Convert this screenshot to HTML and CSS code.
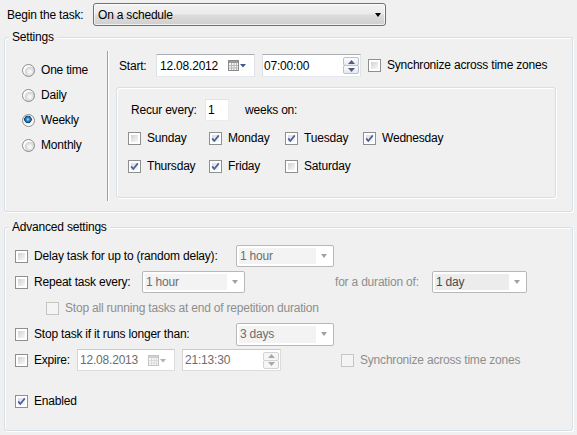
FILE: index.html
```html
<!DOCTYPE html>
<html>
<head>
<meta charset="utf-8">
<link rel="stylesheet" href="styles.css">
</head>
<body>
<div class="dlg">
  <div class="top-row">
    <span class="top-label">Begin the task:</span>
    <div class="btn-combo"><span class="combo-text">On a schedule</span><span class="arrow arrow-black"></span></div>
  </div>

  <div class="group settings">
    <div class="group-title">Settings</div>
    <div class="settings-body">
      <div class="radios">
        <div class="radio-row"><span class="radio"></span><span class="lbl">One time</span></div>
        <div class="radio-row"><span class="radio"></span><span class="lbl">Daily</span></div>
        <div class="radio-row"><span class="radio on"></span><span class="lbl">Weekly</span></div>
        <div class="radio-row"><span class="radio"></span><span class="lbl">Monthly</span></div>
      </div>
      <div class="sep"></div>
      <div class="right-col">
        <div class="start-row">
          <span class="start-label">Start:</span>
          <div class="field date-field">
            <span class="field-text">12.08.2012</span>
            <svg class="cal" width="19" height="11" viewBox="0 0 19 11">
              <rect x="0.5" y="0.5" width="10" height="10" fill="#f4f4f4" stroke="#8a8a8a"/>
              <rect x="1" y="1" width="9" height="2" fill="#9a9a9a"/>
              <path d="M3.5 3v7M6 3v7M8.5 3v7M1 5.5h9M1 8h9" stroke="#b8b8b8" stroke-width="1"/>
              <path d="M12 4h6l-3 3.5z" fill="#3f5a8c"/>
            </svg>
          </div>
          <div class="field time-field">
            <span class="field-text">07:00:00</span>
            <div class="spin">
              <span class="spin-btn"><svg width="7" height="4" viewBox="0 0 7 4"><path d="M0 4h7L3.5 0z" fill="#4b6088"/></svg></span>
              <span class="spin-btn"><svg width="7" height="4" viewBox="0 0 7 4"><path d="M0 0h7L3.5 4z" fill="#4b6088"/></svg></span>
            </div>
          </div>
          <span class="cb"></span>
          <span class="lbl cb-lbl">Synchronize across time zones</span>
        </div>

        <div class="recur-panel">
          <div class="recur-row">
            <span class="recur-label">Recur every:</span>
            <div class="field num-field"><span class="field-text">1</span></div>
            <span class="lbl weeks-lbl">weeks on:</span>
          </div>
          <div class="days">
            <div class="day"><span class="cb"></span><span class="lbl">Sunday</span></div>
            <div class="day"><span class="cb checked"><svg width="11" height="11" viewBox="0 0 11 11"><path d="M2.2 5.4l2.1 2.6 4.5-5.6" fill="none" stroke="#4a5e96" stroke-width="1.7"/></svg></span><span class="lbl">Monday</span></div>
            <div class="day"><span class="cb checked"><svg width="11" height="11" viewBox="0 0 11 11"><path d="M2.2 5.4l2.1 2.6 4.5-5.6" fill="none" stroke="#4a5e96" stroke-width="1.7"/></svg></span><span class="lbl">Tuesday</span></div>
            <div class="day"><span class="cb checked"><svg width="11" height="11" viewBox="0 0 11 11"><path d="M2.2 5.4l2.1 2.6 4.5-5.6" fill="none" stroke="#4a5e96" stroke-width="1.7"/></svg></span><span class="lbl">Wednesday</span></div>
            <div class="day"><span class="cb checked"><svg width="11" height="11" viewBox="0 0 11 11"><path d="M2.2 5.4l2.1 2.6 4.5-5.6" fill="none" stroke="#4a5e96" stroke-width="1.7"/></svg></span><span class="lbl">Thursday</span></div>
            <div class="day"><span class="cb checked"><svg width="11" height="11" viewBox="0 0 11 11"><path d="M2.2 5.4l2.1 2.6 4.5-5.6" fill="none" stroke="#4a5e96" stroke-width="1.7"/></svg></span><span class="lbl">Friday</span></div>
            <div class="day"><span class="cb"></span><span class="lbl">Saturday</span></div>
          </div>
        </div>
      </div>
    </div>
  </div>

  <div class="group advanced">
    <div class="group-title">Advanced settings</div>
    <div class="adv-rows">
      <div class="adv-row">
        <span class="cb"></span>
        <span class="lbl adv-lbl w-long">Delay task for up to (random delay):</span>
        <div class="dis-combo w98"><span class="dis-text">1 hour</span><span class="arrow arrow-gray"></span></div>
      </div>
      <div class="adv-row">
        <span class="cb"></span>
        <span class="lbl adv-lbl w-repeat">Repeat task every:</span>
        <div class="dis-combo w103"><span class="dis-text">1 hour</span><span class="arrow arrow-gray"></span></div>
        <span class="lbl gray dur-lbl">for a duration of:</span>
        <div class="dis-combo w95"><span class="dis-text dark">1 day</span><span class="arrow arrow-gray"></span></div>
      </div>
      <div class="adv-row indent">
        <span class="cb disabled"></span>
        <span class="lbl adv-lbl gray">Stop all running tasks at end of repetition duration</span>
      </div>
      <div class="adv-row">
        <span class="cb"></span>
        <span class="lbl adv-lbl w-long">Stop task if it runs longer than:</span>
        <div class="dis-combo w98 h23"><span class="dis-text">3 days</span><span class="arrow arrow-gray"></span></div>
      </div>
      <div class="adv-row">
        <span class="cb"></span>
        <span class="lbl adv-lbl w-expire">Expire:</span>
        <div class="field date-field dis-field w98">
          <span class="field-text">12.08.2013</span>
          <svg class="cal" width="19" height="11" viewBox="0 0 19 11">
            <rect x="0.5" y="0.5" width="10" height="10" fill="#f8f8f8" stroke="#c4c4c4"/>
            <rect x="1" y="1" width="9" height="2" fill="#cfcfcf"/>
            <path d="M3.5 3v7M6 3v7M8.5 3v7M1 5.5h9M1 8h9" stroke="#dadada" stroke-width="1"/>
            <path d="M12 4h6l-3 3.5z" fill="#b0b0b0"/>
          </svg>
        </div>
        <div class="field time-field dis-field">
          <span class="field-text">21:13:30</span>
          <div class="spin dis-spin">
            <span class="spin-btn"><svg width="7" height="4" viewBox="0 0 7 4"><path d="M0 4h7L3.5 0z" fill="#a8a8a8"/></svg></span>
            <span class="spin-btn"><svg width="7" height="4" viewBox="0 0 7 4"><path d="M0 0h7L3.5 4z" fill="#a8a8a8"/></svg></span>
          </div>
        </div>
        <span class="cb disabled sync2"></span>
        <span class="lbl gray cb-lbl">Synchronize across time zones</span>
      </div>
      <div class="adv-row enabled-row">
        <span class="cb checked"><svg width="11" height="11" viewBox="0 0 11 11"><path d="M2.2 5.4l2.1 2.6 4.5-5.6" fill="none" stroke="#4a5e96" stroke-width="1.7"/></svg></span>
        <span class="lbl adv-lbl">Enabled</span>
      </div>
    </div>
  </div>
</div>
</body>
</html>
```

FILE: styles.css
```css
html, body {
  margin: 0;
  padding: 0;
}
body {
  background: #f0f0f0;
  font-family: "Liberation Sans", Arial, sans-serif;
  font-size: 12px;
  letter-spacing: -0.2px;
  color: #000;
  width: 577px;
  height: 435px;
  overflow: hidden;
}
.dlg {
  padding-top: 3px;
}
.lbl {
  white-space: nowrap;
  line-height: 15px;
}
.gray {
  color: #8e8e8e;
}

/* top row */
.top-row {
  display: flex;
  align-items: center;
  padding-left: 7px;
  height: 23px;
}
.top-label {
  width: 86px;
  white-space: nowrap;
}
.btn-combo {
  box-sizing: border-box;
  width: 293px;
  height: 23px;
  border: 1px solid #707070;
  border-radius: 3px;
  background: linear-gradient(#f3f3f3 0%, #ebebeb 48%, #dddddd 52%, #cfcfcf 100%);
  box-shadow: inset 0 0 0 1px rgba(255,255,255,0.7);
  display: flex;
  align-items: center;
  justify-content: space-between;
  padding: 0 4px 0 4px;
}
.arrow {
  width: 0;
  height: 0;
  border-left: 3.5px solid transparent;
  border-right: 3.5px solid transparent;
  border-top: 4px solid #000;
}
.arrow-gray {
  border-top-color: #a2a2a2;
  margin-right: 4px;
}

/* group boxes */
.group {
  box-sizing: border-box;
  width: 569px;
  margin-left: 4px;
  border: 1px solid #d5dfe5;
  border-radius: 3px;
  box-shadow: inset 1px 1px 0 #fff, 1px 1px 0 #fff;
}
.settings {
  margin-top: 11px;
  height: 175px;
}
.advanced {
  margin-top: 15px;
  height: 204px;
}
.group-title {
  display: block;
  width: max-content;
  margin-top: -8px;
  margin-left: 4px;
  padding: 0 3px;
  height: 15px;
  line-height: 15px;
  background: #f0f0f0;
}

/* settings body */
.settings-body {
  display: flex;
  margin-top: 6px;
}
.radios {
  width: 102px;
  box-sizing: border-box;
  padding-left: 17px;
  padding-top: 7px;
}
.radio-row {
  display: flex;
  align-items: center;
  height: 25px;
}
.radio-row .lbl {
  margin-left: 6px;
}
.radio {
  box-sizing: border-box;
  width: 13px;
  height: 13px;
  flex: none;
  border-radius: 50%;
  border: 1px solid #8a8d90;
  background: radial-gradient(circle at 62% 62%, #fbfbfb 0, #eeeeee 2px, #d2d2d2 4.5px, #fdfdfd 5.5px);
}
.radio.on {
  background: radial-gradient(circle at 45% 40%, #b7e4fb 0, #3c95d4 1.5px, #16578f 3px, #0b3d6c 3.5px, #e6e6e6 4px, #fdfdfd 5.5px);
}
.sep {
  width: 1px;
  height: 150px;
  background: #a0a0a0;
  border-right: 1px solid #fff;
}
.right-col {
  padding-left: 7px;
}
.start-row {
  display: flex;
  align-items: center;
  margin-top: 3px;
  padding-left: 3px;
  height: 23px;
}
.start-label {
  width: 37px;
}
.field {
  box-sizing: border-box;
  background: #fff;
  border: 1px solid;
  border-color: #abadb3 #e2e3ea #e3e9ef #dbdfe6;
  display: flex;
  align-items: center;
  white-space: nowrap;
}
.field-text {
  padding-left: 3px;
  flex: 1;
}
.date-field {
  width: 99px;
  height: 23px;
}
.date-field .cal {
  margin-right: 7px;
}
.time-field {
  width: 99px;
  height: 23px;
  margin-left: 7px;
}
.time-field .field-text {
  padding-left: 1px;
}
.spin {
  display: flex;
  flex-direction: column;
  margin-right: 1px;
}
.spin-btn {
  box-sizing: border-box;
  width: 16px;
  height: 9px;
  border: 1px solid #b9c2cb;
  border-radius: 2px;
  background: linear-gradient(#fdfdfd, #e8e9eb);
  display: flex;
  align-items: center;
  justify-content: center;
}
.spin-btn + .spin-btn {
  margin-top: -1px;
  height: 9px;
}
.dis-spin .spin-btn {
  border-color: #d3d3d3;
  background: #f6f6f6;
}

/* checkbox */
.cb {
  box-sizing: border-box;
  flex: none;
  width: 13px;
  height: 13px;
  border: 1px solid #8e8f8f;
  padding: 2px;
  background: linear-gradient(135deg, #d2d2d2, #f8f8f8) content-box, #fff;
  display: block;
}
.cb svg {
  display: block;
  margin: -2px;
}
.cb.checked {
  background: linear-gradient(135deg, #d9dde4, #f7f8fa) content-box, #fff;
}
.cb.disabled {
  border-color: #c5c5c5;
  background: #f4f4f4;
}
.cb-lbl {
  margin-left: 6px;
}
.start-row .cb {
  margin-left: 7px;
}

/* recur panel */
.recur-panel {
  box-sizing: border-box;
  width: 440px;
  height: 111px;
  margin-top: 10px;
  border: 1px solid #d5dfe5;
  border-radius: 3px;
  box-shadow: inset 1px 1px 0 #fff, 1px 1px 0 #fff;
  padding: 11px 0 0 11px;
}
.recur-row {
  display: flex;
  align-items: center;
  padding-left: 3px;
  height: 22px;
}
.recur-label {
  width: 74px;
}
.num-field {
  width: 24px;
  height: 22px;
  border-color: #e3e3e3 #ececec #ececec #e8e8e8;
}
.num-field .field-text {
  padding-left: 2px;
}
.weeks-lbl {
  margin-left: 16px;
}
.days {
  display: grid;
  grid-template-columns: 81px 76px 78px auto;
  row-gap: 8px;
  margin-top: 7px;
}
.day {
  display: flex;
  align-items: center;
  height: 20px;
}
.day .lbl {
  margin-left: 6px;
}

/* advanced */
.adv-rows {
  margin-top: 8px;
  padding-left: 10px;
}
.adv-row {
  display: flex;
  align-items: center;
  height: 26px;
}
.adv-row.indent {
  padding-left: 31px;
}
.adv-lbl {
  margin-left: 6px;
}
.w-long { width: 202px; }
.w-repeat { width: 108px; }
.w-expire { width: 43px; }
.dis-combo {
  box-sizing: border-box;
  height: 22px;
  border: 1px solid #b8b8b8;
  border-radius: 2px;
  background: #fff;
  display: flex;
  align-items: center;
  padding: 2px;
}
.dis-combo.h23 { height: 23px; }
.w98 { width: 98px; }
.w103 { width: 103px; }
.w95 { width: 95px; }
.dis-text {
  flex: 1;
  align-self: stretch;
  display: flex;
  align-items: center;
  background: #f3f3f3;
  color: #6d6d6d;
  padding-left: 1px;
  margin-right: 5px;
  white-space: nowrap;
}
.dis-text.dark {
  color: #4a4a4a;
  background: #ececec;
}
.dur-lbl {
  margin-left: 90px;
  width: 97px;
}
.dis-field {
  border-color: #c9c9c9 #dcdcdc #dcdcdc #d5d5d5;
  color: #6d6d6d;
  height: 22px;
}
.dis-field .field-text {
  padding-left: 2px;
}
.sync2 {
  margin-left: 60px;
}
.enabled-row {
  margin-top: 15px;
}
```
